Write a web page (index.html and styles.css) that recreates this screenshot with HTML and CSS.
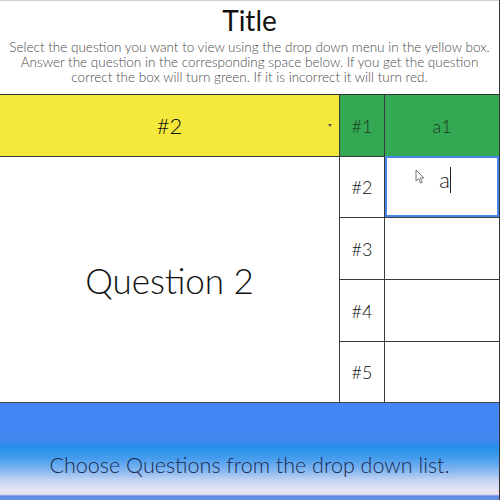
FILE: index.html
```html
<!DOCTYPE html>
<html>
    <head>
        <meta charset="UTF-8">
        <title>Question Sheet</title>
        <link rel="stylesheet" href="styles.css">
    </head>
    <body>
        <div class="page">
            <header class="intro">
                <h1>Title</h1>
                <p>Select the question you want to view using the drop down menu in the yellow box.<br>
                Answer the question in the corresponding space below. If you get the question<br>
                correct the box will turn green. If it is incorrect it will turn red.</p>
            </header>

            <div class="sheet">
                <div class="picker">
                    <span>#2</span>
                    <span class="arrow"></span>
                </div>
                <div class="num correct">#1</div>
                <div class="answer correct">a1</div>

                <div class="question">Question 2</div>
                <div class="num">#2</div>
                <div class="answer active">
                    <svg class="pointer" width="10" height="15" viewBox="0 0 10 15">
                        <path d="M1 1 L1 12 L3.6 9.6 L5.6 14 L7.2 13.3 L5.3 9 L8.8 9 Z" fill="#fff" stroke="#777" stroke-width="1" stroke-linejoin="round"/>
                    </svg>
                    <span class="typed">a</span><span class="caret"></span>
                </div>

                <div class="num">#3</div>
                <div class="answer"></div>

                <div class="num">#4</div>
                <div class="answer"></div>

                <div class="num">#5</div>
                <div class="answer"></div>
            </div>

            <footer class="hint">
                <p>Choose Questions from the drop down list.</p>
            </footer>
        </div>
    </body>
</html>
```

FILE: styles.css
```css
body {
    margin: 0;
    padding: 0;
    background: #ffffff;
    font-family: Lato, "Open Sans", sans-serif;
    font-weight: 300;
    color: #111111;
}

.page {
    width: 499px;
    height: 500px;
    border-right: 1px solid #333333;
    display: flex;
    flex-direction: column;
    overflow: hidden;
}

.intro {
    height: 93px;
    border-top: 1px solid #cfcfcf;
    text-align: center;
}

.intro h1 {
    margin: 0;
    padding-top: 4px;
    font-size: 28px;
    font-weight: 400;
    line-height: 30px;
}

.intro p {
    margin: 5px 0 0;
    font-size: 13.5px;
    line-height: 15px;
    color: #4a4a4a;
    white-space: nowrap;
}

.sheet {
    display: grid;
    grid-template-columns: 339px 44px 1fr;
    grid-template-rows: 61px 60px 61px 61px 60px;
    gap: 1px;
    background: #3a3a3a;
    border-top: 1px solid #333333;
    border-bottom: 1px solid #444444;
}

.sheet > div {
    display: flex;
    align-items: center;
    justify-content: center;
    background: #ffffff;
}

.picker {
    position: relative;
    background: #f4e83d !important;
    font-size: 22px;
}

.arrow {
    position: absolute;
    right: 7px;
    top: 29px;
    border-left: 2.5px solid transparent;
    border-right: 2.5px solid transparent;
    border-top: 3px solid #555555;
}

.question {
    grid-column: 1;
    grid-row: 2 / 6;
    font-size: 35px;
    padding-top: 0;
}

.num {
    font-size: 18px;
}

.answer {
    font-size: 18px;
}

.correct {
    background: #34a853 !important;
    color: #1d3a22;
}

.active {
    position: relative;
    box-shadow: inset 0 0 0 2px #4a86e8;
    margin-top: -1px;
    align-items: flex-start !important;
    padding-top: 13px;
}

.pointer {
    position: absolute;
    left: 30px;
    top: 13px;
}

.typed {
    margin-left: 6px;
    font-size: 22px;
    line-height: 22px;
}

.caret {
    display: inline-block;
    width: 1px;
    height: 26px;
    background: #222222;
    margin-top: -2px;
}

.hint {
    flex: 1;
    display: flex;
    align-items: flex-end;
    justify-content: center;
    background: linear-gradient(to bottom,
        #4285f4 0%, #4387f2 37%, #2590ea 46%,
        #4a9eee 58%, #86b8f0 70%, #c6d4f4 80%, #e6e2f4 90%, #ece3f3 94%,
        #5a8ae6 96%, #6a92e6 100%);
}

.hint p {
    margin: 0 0 22px;
    font-size: 21.5px;
    color: #1c2a52;
}
```
